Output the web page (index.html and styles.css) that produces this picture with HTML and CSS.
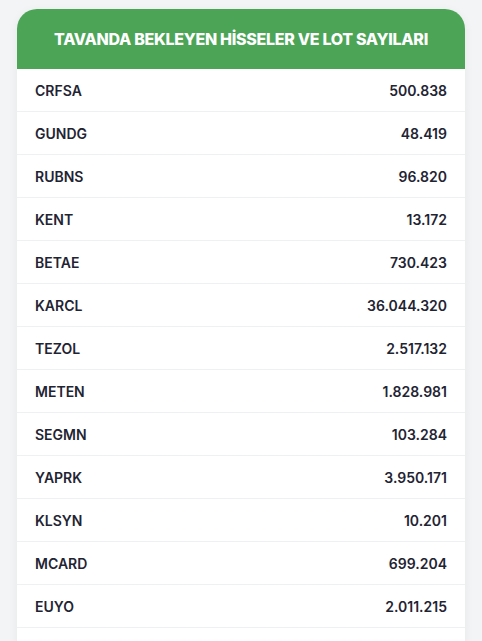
FILE: index.html
```html
<html lang="tr">
<head>
  <meta charset="UTF-8">
  <link rel="stylesheet" href="styles.css">
</head>
<body>
<div class="card">
  <div class="card-header">TAVANDA BEKLEYEN HİSSELER VE LOT SAYILARI</div>
  <div class="list">
    <div class="row"><span class="code">CRFSA</span><span class="lot">500.838</span></div>
    <div class="row"><span class="code">GUNDG</span><span class="lot">48.419</span></div>
    <div class="row"><span class="code">RUBNS</span><span class="lot">96.820</span></div>
    <div class="row"><span class="code">KENT</span><span class="lot">13.172</span></div>
    <div class="row"><span class="code">BETAE</span><span class="lot">730.423</span></div>
    <div class="row"><span class="code">KARCL</span><span class="lot">36.044.320</span></div>
    <div class="row"><span class="code">TEZOL</span><span class="lot">2.517.132</span></div>
    <div class="row"><span class="code">METEN</span><span class="lot">1.828.981</span></div>
    <div class="row"><span class="code">SEGMN</span><span class="lot">103.284</span></div>
    <div class="row"><span class="code">YAPRK</span><span class="lot">3.950.171</span></div>
    <div class="row"><span class="code">KLSYN</span><span class="lot">10.201</span></div>
    <div class="row"><span class="code">MCARD</span><span class="lot">699.204</span></div>
    <div class="row"><span class="code">EUYO</span><span class="lot">2.011.215</span></div>
    <div class="row"></div>
  </div>
</div>
</body>
</html>
```

FILE: styles.css
```css
body {
  margin: 0;
  padding: 9px 17px 0 17px;
  background-color: #f3f4f6;
  font-family: Inter, "Noto Sans", sans-serif;
  color: #1f2433;
}

.card {
  background-color: #ffffff;
  border-radius: 20px 20px 0 0;
  box-shadow: 0 2px 10px rgba(0, 0, 0, 0.06);
  overflow: hidden;
}

.card-header {
  height: 60px;
  display: flex;
  align-items: center;
  justify-content: center;
  background-color: #4ca456;
  color: #ffffff;
  font-size: 16px;
  font-weight: 800;
  letter-spacing: -0.3px;
}

.row {
  height: 42px;
  display: flex;
  align-items: center;
  justify-content: space-between;
  padding: 0 18px;
  border-bottom: 1px solid #eef0f2;
  font-size: 14px;
  font-weight: 600;
}
```
